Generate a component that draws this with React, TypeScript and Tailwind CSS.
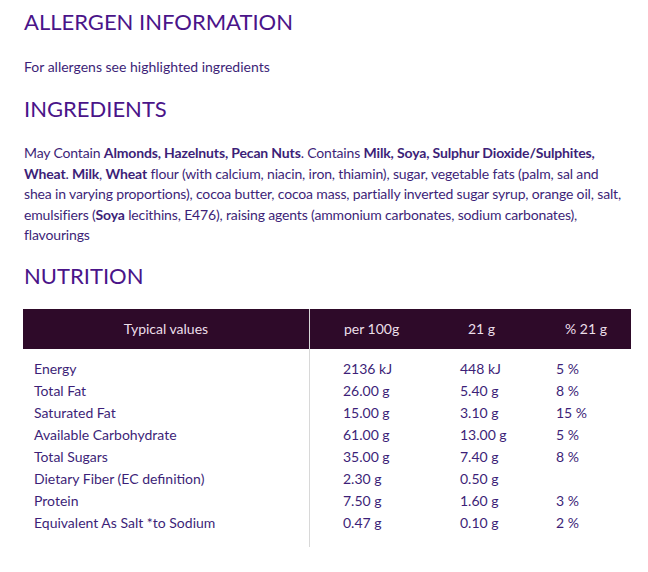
import React from 'react';

const rows: [string, string, string, string][] = [
  ['Energy', '2136 kJ', '448 kJ', '5 %'],
  ['Total Fat', '26.00 g', '5.40 g', '8 %'],
  ['Saturated Fat', '15.00 g', '3.10 g', '15 %'],
  ['Available Carbohydrate', '61.00 g', '13.00 g', '5 %'],
  ['Total Sugars', '35.00 g', '7.40 g', '8 %'],
  ['Dietary Fiber (EC definition)', '2.30 g', '0.50 g', ''],
  ['Protein', '7.50 g', '1.60 g', '3 %'],
  ['Equivalent As Salt *to Sodium', '0.47 g', '0.10 g', '2 %'],
];

export default function App() {
  return (
    <div className="w-[648px] h-[572px] bg-white font-['Lato',sans-serif] text-[#3d1f78] pl-6 pr-4 pt-[8px]">
      <h2 className="text-[22px] leading-[28px] text-[#4a1489]">ALLERGEN INFORMATION</h2>
      <p className="mt-[22px] text-[14px] leading-[18px]">For allergens see highlighted ingredients</p>
      <h2 className="mt-[19px] text-[22px] leading-[28px] text-[#4a1489]">INGREDIENTS</h2>
      <p className="mt-[20px] w-[603px] text-[14px] leading-[20.5px] tracking-[-0.15px]">
        May Contain <b>Almonds, Hazelnuts, Pecan Nuts</b>. Contains <b>Milk, Soya, Sulphur Dioxide/Sulphites, Wheat</b>. <b>Milk</b>, <b>Wheat</b> flour (with calcium, niacin, iron, thiamin), sugar, vegetable fats (palm, sal and shea in varying proportions), cocoa butter, cocoa mass, partially inverted sugar syrup, orange oil, salt, emulsifiers (<b>Soya</b> lecithins, E476), raising agents (ammonium carbonates, sodium carbonates), flavourings
      </p>
      <h2 className="mt-[16px] text-[22px] leading-[28px] text-[#4a1489]">NUTRITION</h2>
      <div className="mt-[19px] w-[608px] -ml-px">
        <div className="flex h-10 bg-[#2e0a29] text-[#ecdfe9] text-[14px] items-center">
          <div className="w-[287px] h-full flex items-center justify-center border-r border-[#d8d8d8]">Typical values</div>
          <div className="w-[121px] pl-[34px]">per 100g</div>
          <div className="w-[97px] pl-[37px]">21 g</div>
          <div className="flex-1 pl-[37px]">% 21 g</div>
        </div>
        <div className="flex text-[14px]">
          <div className="w-[287px] border-r border-[#d8d8d8] pt-[9px] pb-[13px] pl-[11px]">
            {rows.map((r) => (
              <div key={r[0]} className="h-[22px] leading-[22px]">{r[0]}</div>
            ))}
          </div>
          <div className="flex-1 pt-[9px]">
            {rows.map((r) => (
              <div key={r[0]} className="flex h-[22px] leading-[22px]">
                <div className="w-[150px] pl-[33px]">{r[1]}</div>
                <div className="w-[96px]">{r[2]}</div>
                <div className="flex-1">{r[3]}</div>
              </div>
            ))}
          </div>
        </div>
      </div>
    </div>
  );
}
